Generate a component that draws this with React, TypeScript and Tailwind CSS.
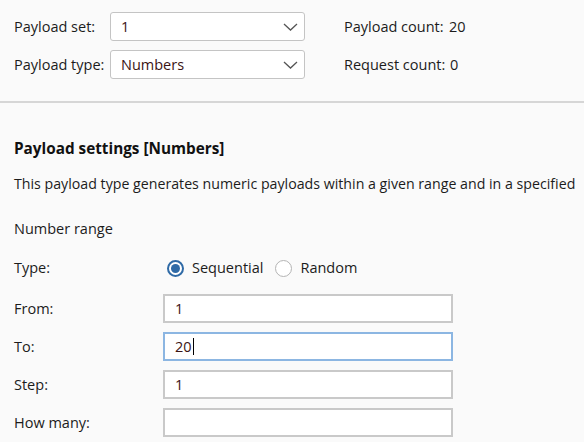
import { useState } from 'react';

function Chevron() {
  return (
    <svg width="15" height="8" viewBox="0 0 15 8" fill="none" className="shrink-0">
      <path d="M1 1l6.5 6L14 1" stroke="#555" strokeWidth="1.3" />
    </svg>
  );
}

function Select({ value }: { value: string }) {
  return (
    <div className="flex h-[29px] w-[195px] items-center justify-between rounded-[3px] border border-[#c4c4c4] bg-white pl-[10px] pr-[6px] text-[#3b1414]">
      <span>{value}</span>
      <Chevron />
    </div>
  );
}

function Field({ label, value, focused }: { label: string; value: string; focused?: boolean }) {
  return (
    <div className="flex h-[29px] items-center">
      <div className="w-[149px]">{label}</div>
      <div
        className={
          'flex h-[29px] w-[290px] items-center border-2 bg-white pl-[10px] text-[#3b1414] ' +
          (focused ? 'border-[#8cb6e2]' : 'border-[#c9c9c9]')
        }
      >
        {value}
        {focused && <span className="ml-[1px] inline-block h-[17px] w-px bg-black" />}
      </div>
    </div>
  );
}

function Radio({ checked, label, onClick }: { checked: boolean; label: string; onClick: () => void }) {
  return (
    <button onClick={onClick} className="flex items-center gap-[8px]">
      <span
        className={
          'flex h-[17px] w-[17px] items-center justify-center rounded-full border bg-white ' +
          (checked ? 'border-[#2f6aa6] border-2' : 'border-[#b4b4b4]')
        }
      >
        {checked && <span className="h-[9px] w-[9px] rounded-full bg-[#2f6aa6]" />}
      </span>
      <span>{label}</span>
    </button>
  );
}

export default function App() {
  const [mode, setMode] = useState<'seq' | 'rand'>('seq');

  return (
    <div
      className="h-[442px] w-[584px] overflow-hidden bg-[#fafafa] text-[14.5px] text-[#1c1c1c]"
      style={{ fontFamily: '"Open Sans", "Noto Sans", sans-serif' }}
    >
      {/* top: payload set / type */}
      <div className="flex pl-[14px] pt-[12px]">
        <div className="flex flex-col gap-[9px]">
          <div className="flex items-center">
            <div className="w-[96px]">Payload set:</div>
            <Select value="1" />
          </div>
          <div className="flex items-center">
            <div className="w-[96px]">Payload type:</div>
            <Select value="Numbers" />
          </div>
        </div>
        <div className="ml-[39px] flex flex-col gap-[9px]">
          <div className="flex h-[29px] items-center">
            <div className="w-[105px]">Payload count:</div>
            <div>20</div>
          </div>
          <div className="flex h-[29px] items-center">
            <div className="w-[106px]">Request count:</div>
            <div>0</div>
          </div>
        </div>
      </div>

      <div className="mt-[22px] h-[2px] bg-[#d6d6d6]" />

      <div className="px-[14px]">
        <h2 className="mt-[34px] text-[15.3px] font-bold leading-[22px] text-[#111]">Payload settings [Numbers]</h2>
        <p className="mt-[15px] whitespace-nowrap text-[14.2px] leading-[20px]">
          This payload type generates numeric payloads within a given range and in a specified
        </p>

        <div className="mt-[25px] leading-[20px]">Number range</div>

        <div className="mt-[19px] flex h-[20px] items-center">
          <div className="w-[153px]">Type:</div>
          <div className="flex items-center gap-[12px]">
            <Radio checked={mode === 'seq'} label="Sequential" onClick={() => setMode('seq')} />
            <Radio checked={mode === 'rand'} label="Random" onClick={() => setMode('rand')} />
          </div>
        </div>

        <div className="mt-[16px] flex flex-col gap-[9px]">
          <Field label="From:" value="1" />
          <Field label="To:" value="20" focused />
          <Field label="Step:" value="1" />
          <Field label="How many:" value="" />
        </div>
      </div>
    </div>
  );
}
